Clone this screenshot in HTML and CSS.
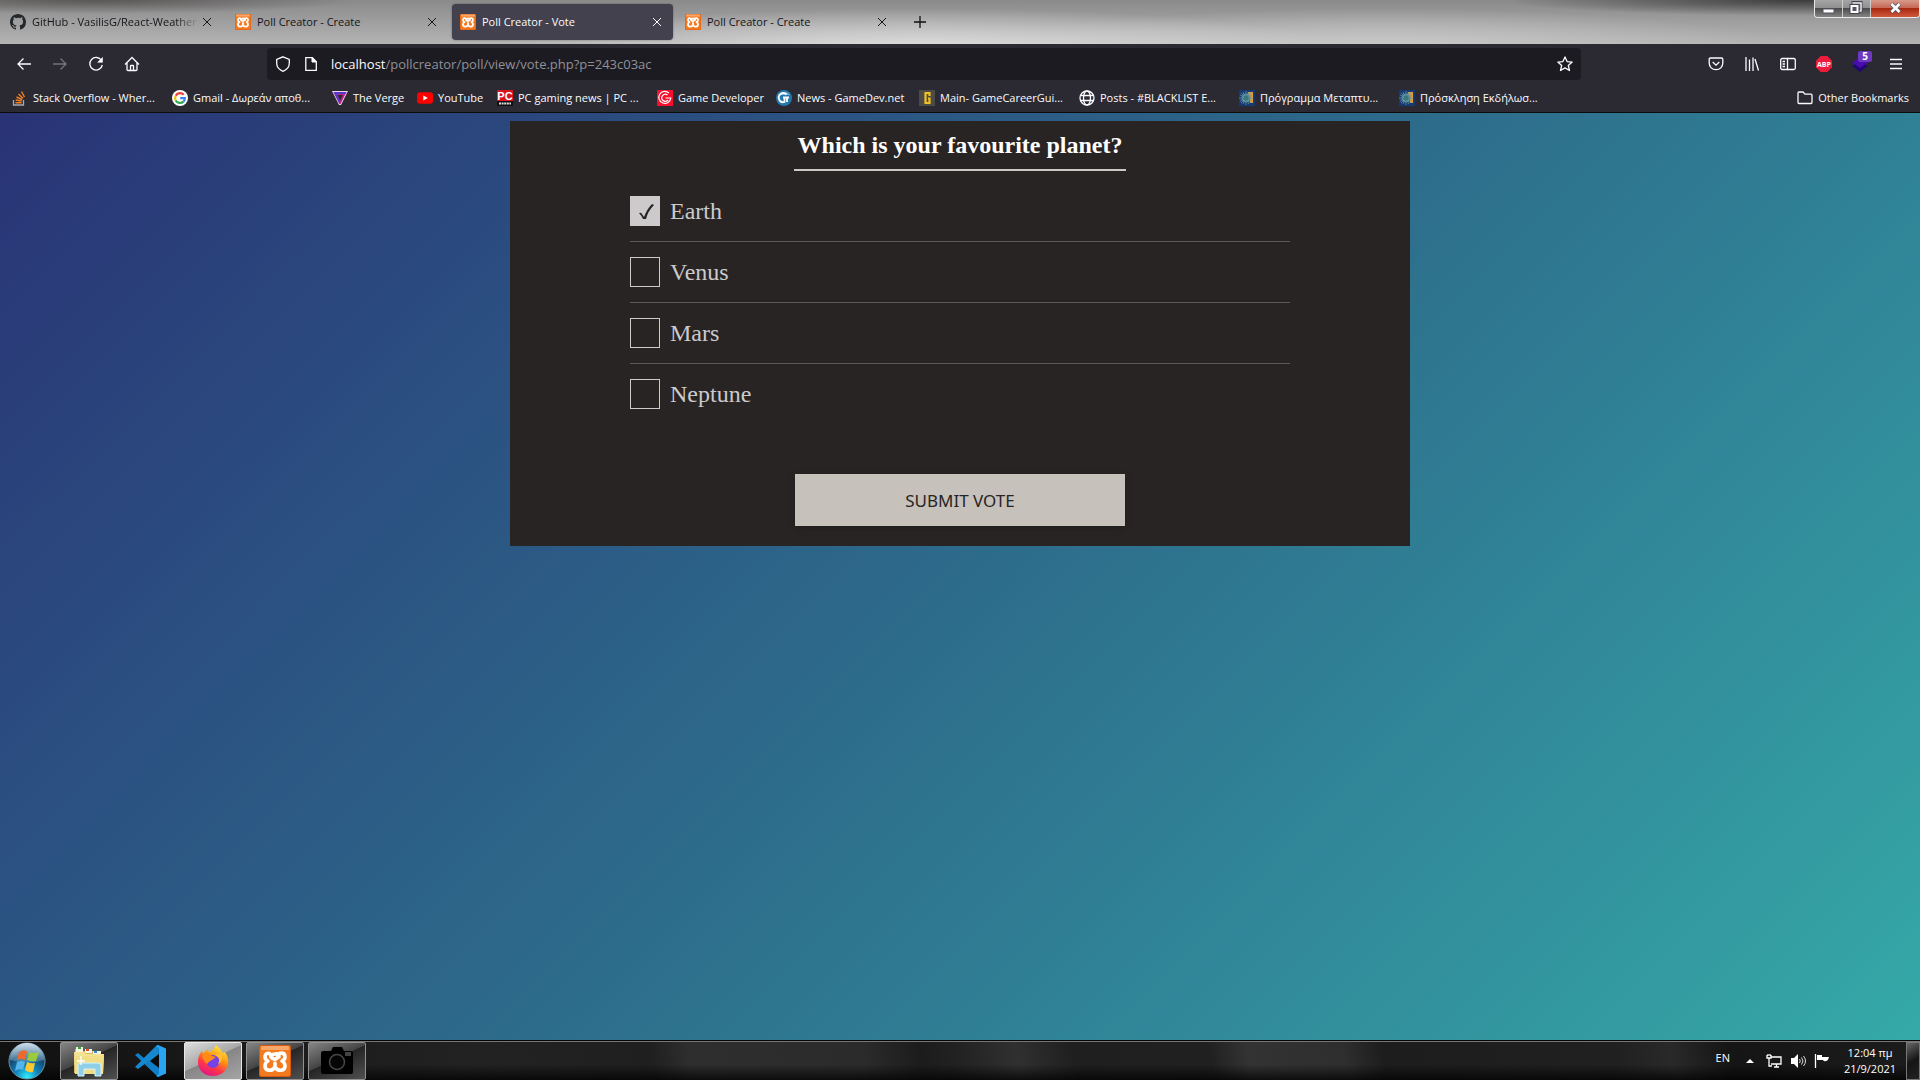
FILE: index.html
```html
<!DOCTYPE html>
<html lang="en">
<head>
<meta charset="utf-8">
<title>Poll Creator - Vote</title>
<link rel="stylesheet" href="styles.css">
</head>
<body>
<svg class="sprite" aria-hidden="true">
  <symbol id="xampp" viewBox="0 0 32 32">
    <rect width="32" height="32" rx="2" fill="#d85a10"/>
    <rect x="1" y="1" width="30" height="30" rx="2" fill="#f47a20"/>
    <rect x="2" y="1" width="28" height="4" rx="1" fill="#f9a66a"/>
    <path d="M12 12c0-5-6-5-6 0 0 2 1 3 3 4-2 1-3 2-3 5 0 5 7 6 10 1 3 5 10 4 10-1 0-3-1-4-3-5 2-1 3-2 3-4 0-5-6-5-7-1-1 4-5 4-7 1M16 22v-4M20 12q0-4-4-3-3 0-4 3" fill="none" stroke="#fff" stroke-width="3.600" stroke-linejoin="round" stroke-linecap="round"/>
  </symbol>
  <symbol id="close" viewBox="0 0 16 16"><path d="M4 4l8 8M12 4l-8 8" fill="none" stroke="currentColor" stroke-width="1"/></symbol>
  <symbol id="uni" viewBox="0 0 16 16">
    <rect width="16" height="16" fill="#173a72"/><path d="M9 2h5v11h-3V6H8z" fill="#e09a35"/>
    <circle cx="7" cy="8" r="4.500" fill="#477f94"/>
    <path d="M7 1v14M0 8h14M2 3l10 10M12 3L2 13M4 2l6 12M10 2L4 14M1 5l12 6M13 5L1 11" stroke="#6ba0aa" stroke-width=".7"/>
    <circle cx="7" cy="8" r="2.500" fill="#3c7480"/>
  </symbol>
</svg>

<header class="browser">
  <div class="tabstrip">
    <nav class="tabs" aria-label="Tabs">
      <div class="tab">
        <svg class="icon" viewBox="0 0 16 16"><path fill="#24292e" d="M8 0C3.580 0 0 3.580 0 8c0 3.540 2.290 6.530 5.470 7.590.4.070.55-.17.55-.38 0-.19-.01-.82-.01-1.490-2.010.37-2.530-.49-2.690-.94-.09-.23-.48-.94-.82-1.130-.28-.15-.68-.52-.01-.53.63-.01 1.080.58 1.230.82.72 1.210 1.870.87 2.330.66.070-.52.28-.87.51-1.070-1.780-.2-3.640-.89-3.640-3.950 0-.87.31-1.590.82-2.150-.08-.2-.36-1.020.08-2.120 0 0 .67-.21 2.200.82A7.600 7.600 0 018 3.860c.68 0 1.360.09 2 .27 1.530-1.040 2.200-.82 2.200-.82.44 1.100.16 1.920.08 2.120.51.56.82 1.270.82 2.150 0 3.070-1.870 3.750-3.650 3.950.29.25.54.73.54 1.480 0 1.070-.01 1.930-.01 2.200 0 .21.15.46.55.38A8.010 8.010 0 0016 8c0-4.420-3.580-8-8-8z"/></svg>
        <a class="tab-title faded" href="#">GitHub - VasilisG/React-Weather</a>
        <button class="tab-close" aria-label="Close tab"><svg class="icon"><use href="#close"/></svg></button>
      </div>
      <div class="tab">
        <svg class="icon"><use href="#xampp"/></svg>
        <a class="tab-title" href="#">Poll Creator - Create</a>
        <button class="tab-close" aria-label="Close tab"><svg class="icon"><use href="#close"/></svg></button>
      </div>
      <div class="tab active">
        <svg class="icon"><use href="#xampp"/></svg>
        <a class="tab-title" href="#">Poll Creator - Vote</a>
        <button class="tab-close" aria-label="Close tab"><svg class="icon"><use href="#close"/></svg></button>
      </div>
      <div class="tab">
        <svg class="icon"><use href="#xampp"/></svg>
        <a class="tab-title" href="#">Poll Creator - Create</a>
        <button class="tab-close" aria-label="Close tab"><svg class="icon"><use href="#close"/></svg></button>
      </div>
      <button class="new-tab" aria-label="New tab"><svg class="icon" viewBox="0 0 16 16"><path d="M8 2v12M2 8h12" stroke="#111" stroke-width="1.300"/></svg></button>
    </nav>
    <div class="window-controls">
      <button class="win" aria-label="Minimize"><svg viewBox="0 0 28 18"><rect x="8" y="9" width="11" height="4" fill="#fff" stroke="#556" stroke-width="1"/></svg></button>
      <button class="win" aria-label="Restore"><svg viewBox="0 0 28 18"><path d="M10 4V2.500h8V11h-2" fill="none" stroke="#445" stroke-width="3"/><path d="M10 3.500V3h8v8h-2" fill="none" stroke="#eee" stroke-width="1.500"/><rect x="8.500" y="6" width="6" height="6" fill="#667" stroke="#445" stroke-width="4"/><rect x="8.500" y="6" width="6" height="6" fill="#556" stroke="#fff" stroke-width="2"/></svg></button>
      <button class="win win-close" aria-label="Close"><svg viewBox="0 0 28 18"><path d="M10.500 4l8 8M18.500 4l-8 8" stroke="#556" stroke-width="4.500"/><path d="M10.500 4l8 8M18.500 4l-8 8" stroke="#fff" stroke-width="2.700"/></svg></button>
    </div>
  </div>

  <div class="navbar">
    <div class="nav-buttons">
      <button class="tool" aria-label="Back"><svg class="icon line" viewBox="0 0 16 16"><path d="M15 8H2M7.500 2.500L2 8l5.500 5.500"/></svg></button>
      <button class="tool dim" aria-label="Forward"><svg class="icon line" viewBox="0 0 16 16"><path d="M1 8h13M8.500 2.500L14 8l-5.500 5.500"/></svg></button>
      <button class="tool" aria-label="Reload"><svg class="icon line" viewBox="0 0 16 16"><path d="M13.500 4.500A6.300 6.300 0 1 0 14.300 9"/><path d="M14.500 1.500v4.800H9.700z" fill="currentColor" stroke-width=".6"/></svg></button>
      <button class="tool" aria-label="Home"><svg class="icon line" viewBox="0 0 16 16"><path d="M1 8.500L8 1.500l7 7M3 7v6.500q0 1 1 1h8q1 0 1-1V7M6.500 14.500V10q0-.5.500-.5h2q.5 0 .5.500v4.500"/></svg></button>
    </div>
    <div class="urlbar">
      <svg class="icon line" viewBox="0 0 16 16"><path d="M8 .8l6.300 2.700v3.800c0 3.700-2.500 6.500-6.300 8-3.800-1.500-6.300-4.300-6.300-8V3.500z"/></svg>
      <svg class="icon line" viewBox="0 0 16 16"><path d="M2.800 1.700h6.500l4 4v8.600H2.800z"/><path d="M9 1.500V6h4.500z" fill="currentColor" stroke-width="1"/></svg>
      <a class="url" href="#">localhost<span class="url-path">/pollcreator/poll/view/vote.php?p=243c03ac</span></a>
      <button class="star" aria-label="Bookmark this page"><svg class="icon line" viewBox="0 0 16 16"><path stroke-linejoin="round" d="M8 .9l2.100 4.700 5.100.5-3.900 3.400 1.200 5L8 11.900l-4.500 2.600 1.200-5L.8 6.100l5.100-.5z"/></svg></button>
    </div>
    <div class="nav-tools">
      <button class="tool" aria-label="Pocket"><svg class="icon line" viewBox="0 0 16 16"><path d="M2.500 2h11q1.300 0 1.300 1.300V7c0 4-3 6.700-6.800 6.700S1.200 11 1.200 7V3.300Q1.200 2 2.500 2zM4.700 6L8 9.200 11.300 6"/></svg></button>
      <button class="tool" aria-label="Library"><svg class="icon line" viewBox="0 0 16 16"><path d="M2 1v14M5.500 3.500V15M9 1.500V15M11 3l3.500 11.500"/></svg></button>
      <button class="tool" aria-label="Sidebars"><svg class="icon line" viewBox="0 0 16 16"><rect x=".7" y="2.500" width="14.600" height="11" rx="1.500"/><path d="M7.500 2.500v11M2.500 5.500H5M2.500 8H5M2.500 10.500H5"/></svg></button>
      <button class="tool" aria-label="Adblock Plus"><svg class="icon" viewBox="0 0 16 16"><path d="M4.700 0h6.600L16 4.700v6.600L11.300 16H4.700L0 11.300V4.700z" fill="#ee1c3c"/><text x="8" y="10.600" text-anchor="middle" class="abp">ABP</text></svg></button>
      <button class="tool layers" aria-label="Extension"><svg class="icon" viewBox="0 0 16 16"><path d="M0 10l8-5 8 5-8 6z" fill="#20086e"/><path d="M0 6.500l8-5 8 5-8 5.500z" fill="#4a0cb0"/></svg><span class="badge">5</span></button>
      <button class="tool" aria-label="Menu"><svg class="icon line" viewBox="0 0 16 16"><path d="M2 3.500h12M2 8h12M2 12.500h12"/></svg></button>
    </div>
  </div>

  <nav class="bookmarks" aria-label="Bookmarks">
    <a class="bookmark" href="#"><svg class="icon" viewBox="0 0 16 16"><path d="M1.500 10v5h10v-5" fill="none" stroke="#a8abb0" stroke-width="1.300"/><path d="M3.500 12.700h6M3.700 10l6 1M4.500 7l5.700 2.500M6.500 4l4.500 4.200M9.500 1.500l3 5.500" stroke="#f48024" stroke-width="1.400"/></svg>Stack Overflow - Wher...</a>
    <a class="bookmark" href="#"><svg class="icon" viewBox="0 0 16 16"><circle cx="8" cy="8" r="8" fill="#fff"/><g fill="none" stroke-width="2.200"><path d="M11.700 4.700A4.900 4.900 0 0 0 3.700 5.700" stroke="#ea4335"/><path d="M3.700 5.700a4.900 4.900 0 0 0 0 4.700" stroke="#fbbc05"/><path d="M3.700 10.400a4.900 4.900 0 0 0 7.700 1.200" stroke="#34a853"/><path d="M11.400 11.600A5 5 0 0 0 12.900 8.200H8.200" stroke="#4285f4"/></g></svg>Gmail - Δωρεάν αποθ...</a>
    <a class="bookmark" href="#"><svg class="icon" viewBox="0 0 16 16"><path d="M0 1h16L9 15H7z" fill="#f4d5ec"/><path d="M1.500 2h13l-6 12h-1z" fill="#c02090"/><path d="M1.500 2h13l-1 2H5l3.200 7-.7 3z" fill="#5a35c8"/><path d="M5.500 5h5.500L8.300 10.500z" fill="#2b2a33"/></svg>The Verge</a>
    <a class="bookmark" href="#"><svg class="icon" viewBox="0 0 16 16"><rect y="2.200" width="16" height="11.600" rx="3" fill="#f00"/><path d="M6.300 5.500v5L10.800 8z" fill="#fff"/></svg>YouTube</a>
    <a class="bookmark" href="#"><svg class="icon" viewBox="0 0 16 16"><rect width="16" height="11" fill="#d9141e"/><rect y="11" width="16" height="5" fill="#111"/><text x="8" y="9.700" text-anchor="middle" class="pc">PC</text><path d="M2 13.500h12" stroke="#ddd" stroke-width="2" stroke-dasharray="2 .6"/></svg>PC gaming news | PC ...</a>
    <a class="bookmark" href="#"><svg class="icon" viewBox="0 0 16 16"><rect width="16" height="16" fill="#f80f2c"/><path d="M12 3A6 6 0 1 0 13.800 8H8.500M10.500 5A3.500 3.500 0 1 0 11 10" fill="none" stroke="#fff" stroke-width="1.200"/></svg>Game Developer</a>
    <a class="bookmark" href="#"><svg class="icon" viewBox="0 0 16 16"><circle cx="8" cy="8" r="8" fill="#2478ac"/><path d="M2 5a7 6 0 0 1 12 0z" fill="#72b3d5"/><path d="M10.500 4.500A4.500 4.500 0 1 0 8.500 12V8M7 7.500h6M11 7.500V12" fill="none" stroke="#fff" stroke-width="1.800"/></svg>News - GameDev.net</a>
    <a class="bookmark" href="#"><svg class="icon" viewBox="0 0 16 16"><rect width="16" height="16" fill="#4c4b48"/><path d="M10.500 6V3h-4v10h4V8.500H9" fill="none" stroke="#f4c21f" stroke-width="2.200"/></svg>Main- GameCareerGui...</a>
    <a class="bookmark" href="#"><svg class="icon line" viewBox="0 0 16 16"><circle cx="8" cy="8" r="7"/><ellipse cx="8" cy="8" rx="3.500" ry="7"/><path d="M1.500 5.500h13M1.500 10.500h13"/></svg>Posts - #BLACKLIST E...</a>
    <a class="bookmark" href="#"><svg class="icon"><use href="#uni"/></svg>Πρόγραμμα Μεταπτυ...</a>
    <a class="bookmark" href="#"><svg class="icon"><use href="#uni"/></svg>Πρόσκληση Εκδήλωσ...</a>
    <a class="bookmark other" href="#"><svg class="icon line" viewBox="0 0 16 16"><path d="M1 12.500V3q0-1 1-1h4l2 2.200h6q1 0 1 1v7.300q0 1-1 1H2q-1 0-1-1z"/></svg>Other Bookmarks</a>
  </nav>
</header>

<main class="page">
  <form class="poll">
    <h1 class="question">Which is your favourite planet?</h1>
    <div class="options">
      <label class="option"><input class="box" type="checkbox" checked>Earth</label>
      <label class="option"><input class="box" type="checkbox">Venus</label>
      <label class="option"><input class="box" type="checkbox">Mars</label>
      <label class="option"><input class="box" type="checkbox">Neptune</label>
    </div>
    <button class="submit" type="button">SUBMIT VOTE</button>
  </form>
</main>

<footer class="taskbar">
  <button class="start" aria-label="Start">
    <svg viewBox="0 0 38 38">
      <defs>
        <radialGradient id="orb" cx=".5" cy=".95" r=".9"><stop offset="0" stop-color="#2ff0ff"/><stop offset=".35" stop-color="#1386bd"/><stop offset=".7" stop-color="#12476f"/><stop offset="1" stop-color="#5d88a4"/></radialGradient>
        <linearGradient id="gloss" x2="0" y2="1"><stop offset="0" stop-color="#e0edf5" stop-opacity=".85"/><stop offset="1" stop-color="#9cc0d8" stop-opacity=".3"/></linearGradient>
      </defs>
      <circle cx="19" cy="19" r="18" fill="url(#orb)" stroke="#6f93a8"/>
      <path d="M2 18a17 17 0 0 1 34 0q-17 5-34 0z" fill="url(#gloss)"/>
      <path d="M11 10q4-3 8-1l-2 9q-4-2-8 0z" fill="#ee6a2c"/><path d="M21 10q5 2 10 0l-3 9q-4 1-9-1z" fill="#9acb3c"/>
      <path d="M9 20q4-2 8 0l-2 8q-4-2-8 1z" fill="#55b5ea"/><path d="M19 20q4 2 8 1l-2 9q-4 1-8-2z" fill="#fcc931"/>
    </svg>
  </button>
  <div class="apps">
    <button class="app open" aria-label="Explorer"><svg class="app-icon" viewBox="0 0 32 32"><path d="M2 4h6l1 2h19v22H1z" fill="#d9b95c"/><path d="M3 2h7v5H3zM12 4h7v4h-7zM20 6h8v4h-8z" fill="#f6f3dd"/><path d="M5 2h3v2H5z" fill="#25a840"/><path d="M13 4h3v2h-3z" fill="#d8502c"/><path d="M21 6h3v2h-3z" fill="#2f8edb"/><path d="M1 7h10l2 2h18l-1 20H2z" fill="#f3e292"/><path d="M1 11h30l-1 18H2z" fill="#f0dd86"/><path d="M5 31V21q0-3 3-3h17q3 0 3 3v10h-6v-7H11v7z" fill="#8fd0e8" stroke="#d9f3fa"/><path d="M8 11v9M4 16h8" stroke="#fff" stroke-width="1.300"/></svg></button>
    <button class="app" aria-label="Visual Studio Code"><svg class="app-icon" viewBox="0 0 32 32"><path d="M23 0L9 13 3 8 0 10l21 20 3 2V0z" fill="#0f7fc8"/><path d="M23 9L3 24l-3-2 21-21 2-1z" fill="#1688d0"/><path d="M23 0l8 3.500v25L23 32l-2-1 3-2V3l-3-2z" fill="#2aa4f0"/><path d="M24 9v14l-9-7z" fill="#0b0b0b"/></svg></button>
    <button class="app open current" aria-label="Firefox"><svg class="app-icon" viewBox="0 0 32 32">
      <defs><linearGradient id="fox" x1=".8" y1="0" x2=".3" y2="1"><stop offset="0" stop-color="#fff44f"/><stop offset=".4" stop-color="#ff980e"/><stop offset=".7" stop-color="#ff3647"/><stop offset="1" stop-color="#e31587"/></linearGradient></defs>
      <path d="M19 0q5 4 7 8l2-1q4 6 3 12c-2 9-9 12-15 12C7 31 1 25 1 17q0-7 4-11l1 3q3-4 5-5l1 4q4-2 7-8z" fill="url(#fox)"/><circle cx="16" cy="16.500" r="6.500" fill="#7542e5"/><path d="M5 10q6-4 10 1l4 1-4 3q-3 1-5 4-4-3-5-9z" fill="#ff8a16"/><path d="M18 10q7 3 3 9 7-4 3-11z" fill="#ffbd2f"/></svg></button>
    <button class="app open" aria-label="XAMPP"><svg class="app-icon"><use href="#xampp"/></svg></button>
    <button class="app open" aria-label="Camera"><svg class="app-icon" viewBox="0 0 32 32"><path d="M2 6h8l2-4h9l2 4h7q2 0 2 2v19q0 2-2 2H2q-2 0-2-2V8q0-2 2-2z" fill="#000"/><circle cx="16" cy="17" r="7.500" fill="#050505" stroke="#484848" stroke-width="1.500"/><path d="M24 7h6v4h-6z" fill="#444"/></svg></button>
  </div>
  <div class="tray">
    <span class="lang">EN</span>
    <button class="tray-button" aria-label="Show hidden icons"><svg class="icon" viewBox="0 0 16 16"><path d="M4 10l4-4 4 4z" fill="#fff"/></svg></button>
    <button class="tray-button" aria-label="Network"><svg class="icon" viewBox="0 0 16 16"><path d="M5 4h10v7H5M8 14h5M10.500 11v3M1 2v3h4V2M3 5v8h3M2 1v2M4 1v2" fill="none" stroke="#fff" stroke-width="1.300"/></svg></button>
    <button class="tray-button" aria-label="Volume"><svg class="icon" viewBox="0 0 16 16"><path d="M1 5h3l4-4v14l-4-4H1z" fill="#fff"/><path d="M9.500 6q1.500 2 0 4M11.500 4.500q3 3.500 0 7M13.500 3q4 5 0 10" fill="none" stroke="#ddd"/></svg></button>
    <button class="tray-button" aria-label="Action Center"><svg class="icon" viewBox="0 0 16 16"><path d="M1.500 1v14" stroke="#fff" stroke-width="1.300"/><path d="M3 2h5v2h7q-1 4-3 4-2 1-3-1H3z" fill="#fff"/></svg></button>
    <time class="clock"><span>12:04 πμ</span><span>21/9/2021</span></time>
    <button class="show-desktop" aria-label="Show desktop"></button>
  </div>
</footer>
</body>
</html>
```
FILE: styles.css
```css
* { box-sizing: border-box; }

body {
  margin: 0;
  min-height: 100vh;
  display: flex;
  flex-direction: column;
  font-family: "Open Sans", "Noto Sans", sans-serif;
  font-size: 11px;
  line-height: 16px;
}

button {
  padding: 0;
  border: 0;
  background: none;
  color: inherit;
  font: inherit;
}

a { color: inherit; text-decoration: none; }

svg { display: block; }

.sprite { position: absolute; width: 0; height: 0; }

.icon { width: 16px; height: 16px; flex: none; }

.line { fill: none; stroke: currentColor; stroke-width: 1.3; }

/* Browser chrome */

.browser {
  background: #2b2a33;
  color: #fbfbfe;
  border-bottom: 1px solid #0c0c0d;
}

.tabstrip {
  height: 44px;
  display: flex;
  justify-content: space-between;
  align-items: flex-start;
  background:
    radial-gradient(ellipse 260px 14px at 5% 0, #4d4948cc, transparent),
    radial-gradient(ellipse 300px 16px at 94% 0, #303030dd, transparent),
    radial-gradient(ellipse 420px 40px at 48% 110%, #dedede, transparent),
    radial-gradient(ellipse 400px 40px at 72% 110%, #cacaca, transparent),
    linear-gradient(#8a8a8a, #b4b4b4);
}

.tabs {
  display: flex;
  gap: 4px;
  padding: 4px 2px;
}

.tab {
  width: 221px;
  height: 36px;
  padding: 0 8px;
  display: flex;
  align-items: center;
  gap: 6px;
  border-radius: 4px;
  color: #15141a;
}

.tab.active {
  background: #42414d;
  color: #fbfbfe;
  box-shadow: 0 0 2px #0006;
}

.tab-title { flex: 1; overflow: hidden; white-space: nowrap; }

.faded { mask-image: linear-gradient(to left, transparent, #000 24px); }

.tab-close { margin-left: -6px; }

.new-tab { width: 36px; display: grid; place-items: center; }

.window-controls {
  display: flex;
  border: 1px solid #e8e8e8;
  border-top: 0;
  border-radius: 0 0 4px 4px;
  overflow: hidden;
}

.win {
  width: 28px;
  height: 17px;
  display: grid;
  place-items: center;
  border-right: 1px solid #ccc;
  background: linear-gradient(#a5a5a5, #8e8e8e 50%, #4c4c4c 50%, #858585);
}

.win svg { width: 28px; height: 18px; }

.win-close {
  width: 48px;
  border-right: 0;
  background: linear-gradient(#d79a8c, #c66450 50%, #a82a10 50%, #d0583c);
}

.navbar {
  height: 40px;
  display: flex;
  align-items: center;
  padding: 0 6px 0 8px;
}

.nav-buttons { display: flex; width: 259px; }

.nav-tools { display: flex; margin-left: 117px; }

.tool {
  width: 36px;
  height: 32px;
  display: grid;
  place-items: center;
}

.nav-buttons .tool { padding-right: 4px; }

.tool.dim { color: #74737b; }

.abp { font: bold 7px "Open Sans", sans-serif; fill: #fff; }

.pc { font: bold 11px "Liberation Sans", sans-serif; fill: #fff; }

.layers { position: relative; }

.badge {
  position: absolute;
  top: 3px;
  right: 6px;
  width: 14px;
  border-radius: 2px;
  background: #6f38c0;
  color: #fff;
  font-size: 10px;
  font-weight: 700;
  line-height: 11px;
}

.urlbar {
  flex: 1;
  height: 32px;
  padding: 0 8px;
  display: flex;
  align-items: center;
  gap: 12px;
  border-radius: 4px;
  background: #1c1b22;
}

.url { flex: 1; font-size: 13px; }

.url-path { color: #919096; }

.bookmarks {
  height: 28px;
  padding: 0 11px 0 12px;
  display: grid;
  grid-template-columns: 160px 160px 85px 80px 160px 119px 143px 160px 160px 160px 160px 1fr;
  align-items: center;
}

.bookmark {
  display: flex;
  align-items: center;
  gap: 5px;
  white-space: nowrap;
}

.other { justify-self: end; }

/* Poll */

.page {
  flex: 1;
  padding: 8px;
  background: linear-gradient(135deg, #293376, #2d6b8b 50%, #35a9a8);
}

.poll {
  max-width: 900px;
  margin: 0 auto;
  padding: 8px 120px 20px;
  display: flex;
  flex-direction: column;
  align-items: center;
  background: #282424;
  font-family: "Liberation Serif", "Times New Roman", serif;
  font-size: 24px;
  line-height: 32px;
}

.question {
  margin: 0 0 10px;
  padding: 0 4px 8px;
  border-bottom: 2px solid #ccc9c4;
  color: #fff;
  font-size: 24px;
}

.options { align-self: stretch; }

.option {
  height: 61px;
  display: flex;
  align-items: center;
  gap: 10px;
  border-bottom: 1px solid #5c5856;
  color: #cccacb;
}

.option:last-child { border-bottom-color: transparent; }

.box {
  appearance: none;
  width: 30px;
  height: 30px;
  margin: 0;
  border: 1px solid #cccacb;
}

.box:checked {
  background: #cccacb url("data:image/svg+xml,%3Csvg xmlns='http://www.w3.org/2000/svg' viewBox='0 0 28 28'%3E%3Cpath d='M8 16q2-1 3 1l2 3q3-8 8-13l2 1q-6 6-8 14h-3q-2-4-4-6z' fill='%23282424'/%3E%3C/svg%3E");
}

.submit {
  width: 50%;
  height: 52px;
  margin-top: 49px;
  background: #c6c1ba;
  box-shadow: 0 2px 8px #0003;
  color: #282424;
  font: 17px "Noto Sans", sans-serif;
}

/* Taskbar */

.taskbar {
  height: 40px;
  display: flex;
  align-items: center;
  border-top: 1px solid #050505;
  background:
    linear-gradient(#777 0 1px, transparent 1px),
    linear-gradient(transparent 60%, #000b),
    linear-gradient(80deg, #111, #222 25%, #1f1f1f 34%, #2e2e2e 36%, #2b2b2b 45%, #1c1c1c 48%, #222 50%, #303030 53%, #1f1f1f 56%, #202020 63%, #333 65%, #2e2e2e 70%, #1d1d1d 72%, #202020 84%, #292929 87%, #151515 90%, #1c1c1c);
}

.start { width: 38px; margin: 0 14px 0 8px; }

.start svg { width: 38px; height: 38px; }

.apps { display: flex; gap: 4px; }

.app {
  width: 58px;
  height: 38px;
  display: grid;
  place-items: center;
  border: 1px solid transparent;
  border-radius: 2px;
}

.app.open {
  border-color: #929292;
  background: linear-gradient(155deg, #858585, #444 45%, #252525 46%, #505050);
}

.app.current {
  border-color: #e8e8e8;
  background: linear-gradient(155deg, #dedede, #a8a8a8 45%, #868686 46%, #a5a5a5);
}

.app-icon { width: 32px; height: 32px; }

.tray {
  margin-left: auto;
  display: flex;
  align-items: center;
  color: #fff;
}

.lang { margin: 0 8px 6px 0; }

.tray-button { width: 24px; display: grid; place-items: center; }

.clock {
  width: 72px;
  display: flex;
  flex-direction: column;
  align-items: center;
}

.show-desktop {
  width: 14px;
  height: 38px;
  border: 1px solid #777;
  background: linear-gradient(150deg, #666, #151515 50%, #222);
}
```
